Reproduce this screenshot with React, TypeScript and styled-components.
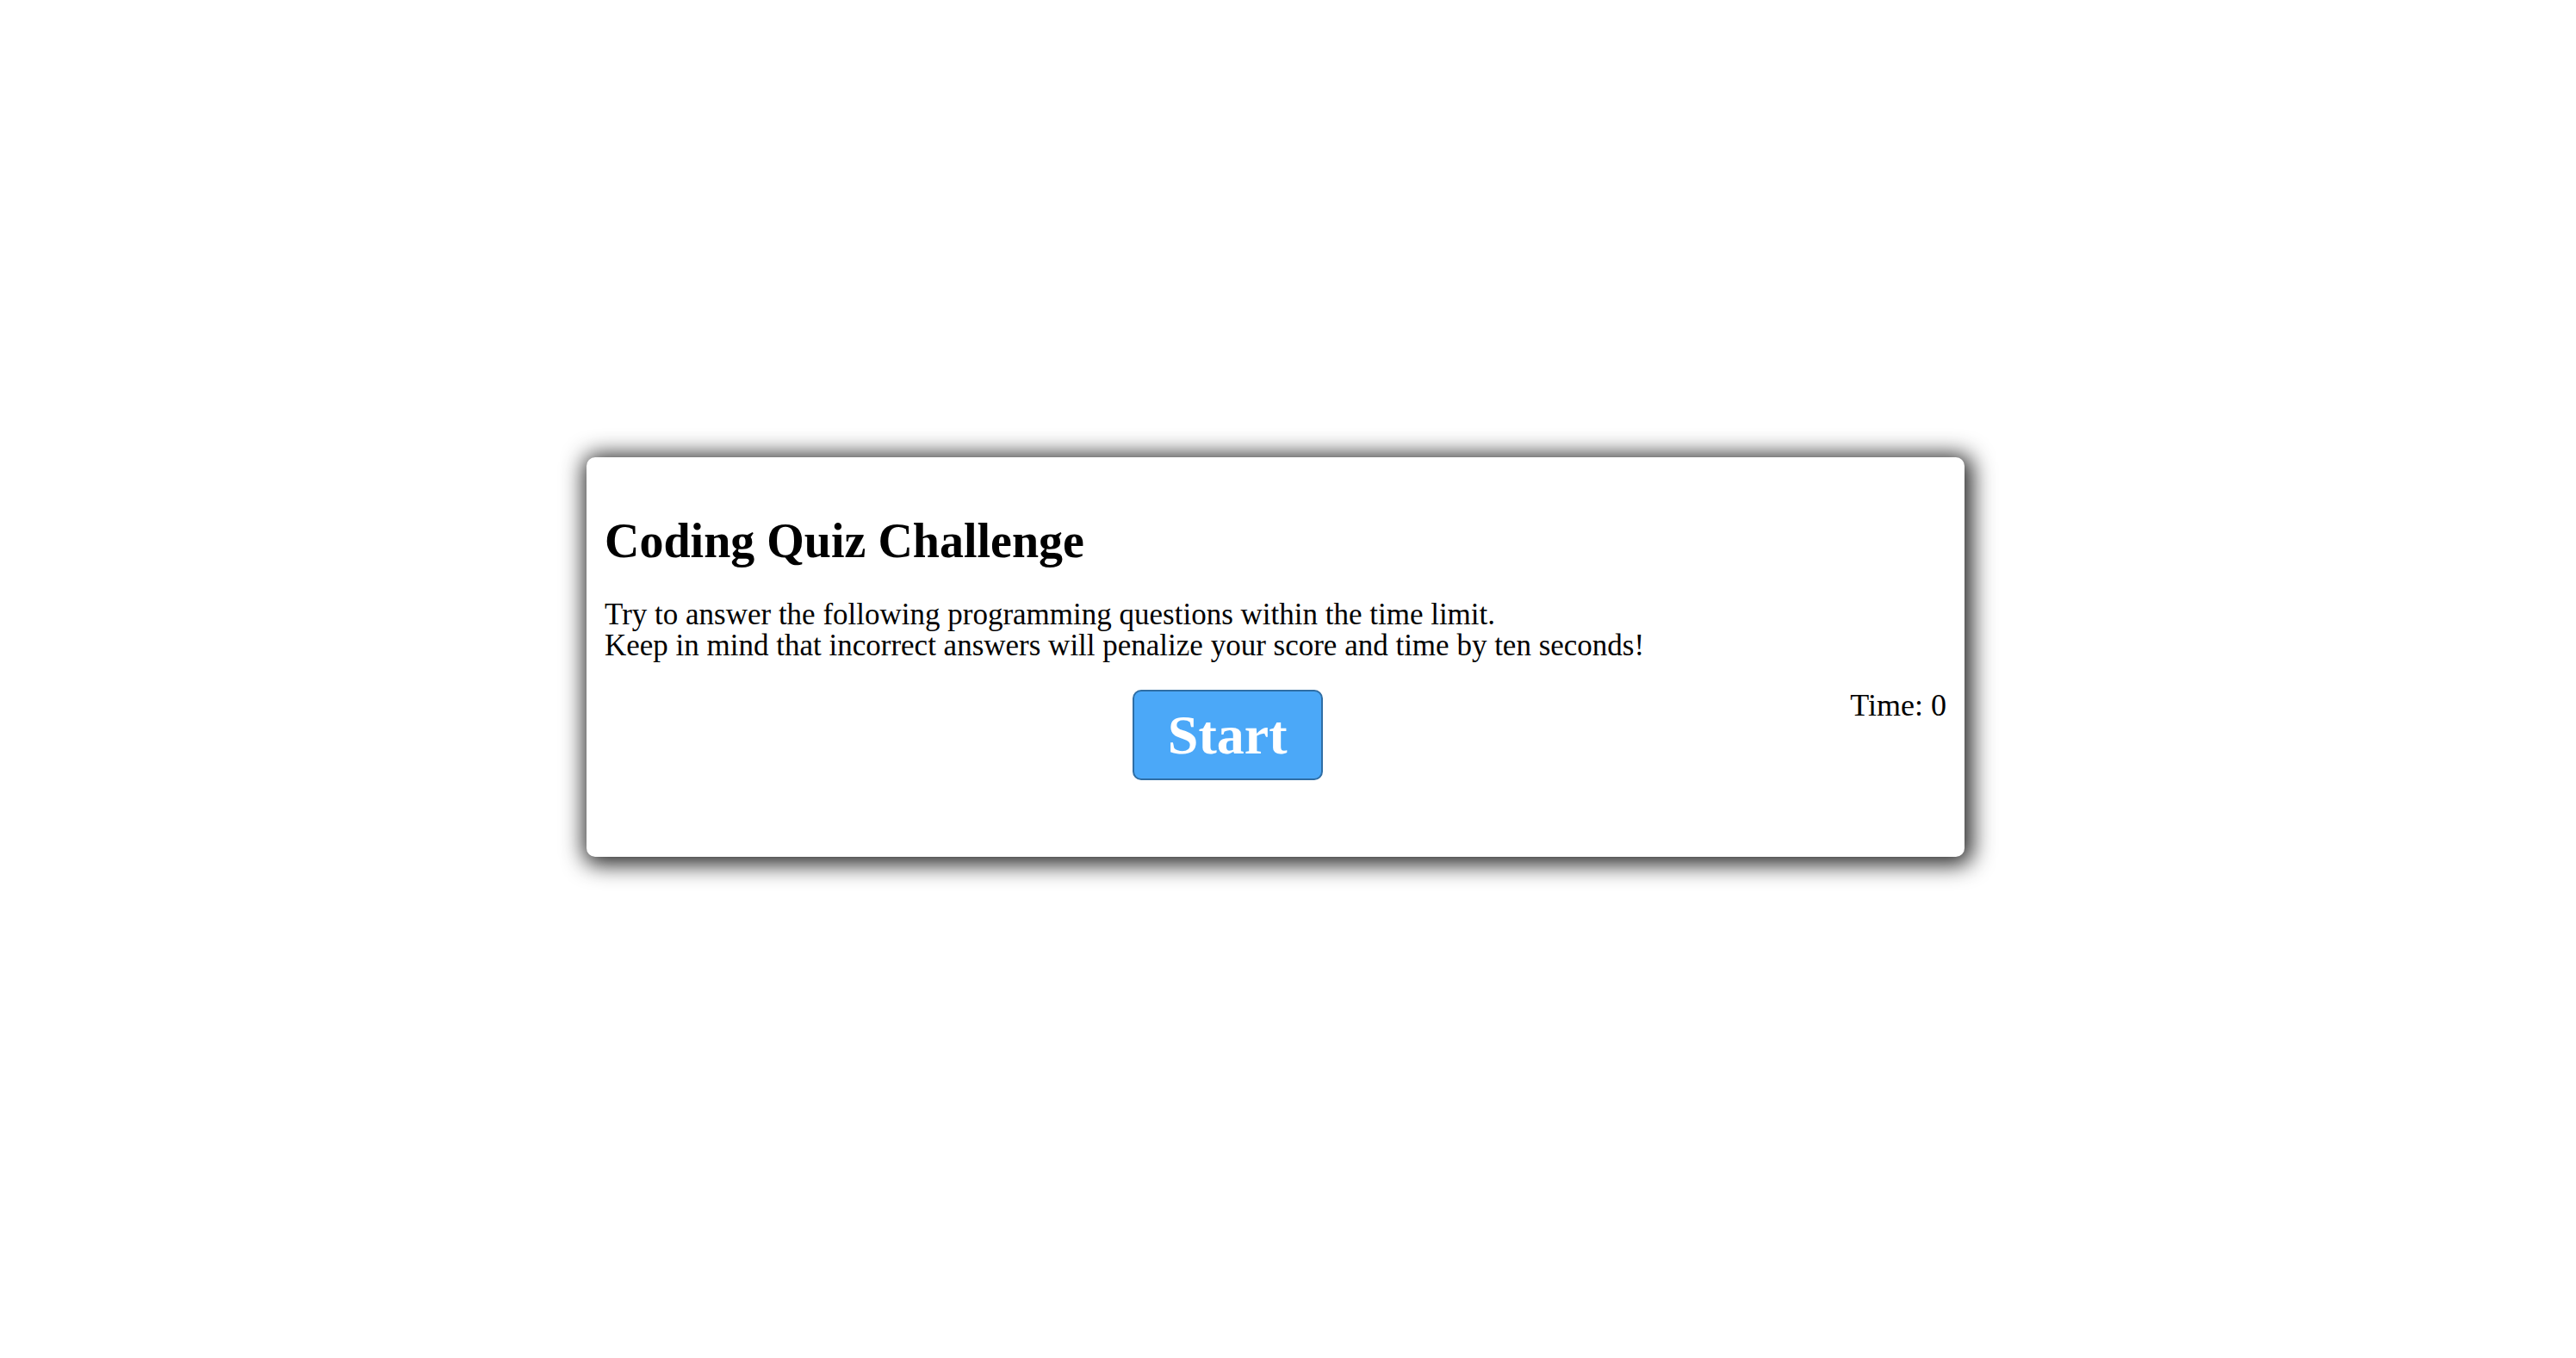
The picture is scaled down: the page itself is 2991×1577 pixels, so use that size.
import React from "react";
import styled, { createGlobalStyle } from "styled-components";

const GlobalStyle = createGlobalStyle`
  html, body {
    margin: 0;
    padding: 0;
    background: #ffffff;
  }
  body {
    font-family: Georgia, "Liberation Serif", serif;
    color: #000;
  }
`;

const Page = styled.main`
  box-sizing: border-box;
  min-height: 100vh;
  padding-top: 531px;
  padding-left: 681px;
`;

const Card = styled.section`
  box-sizing: border-box;
  width: 1600px;
  height: 464px;
  padding: 30px 21px 0 21px;
  background: #ffffff;
  border-radius: 10px;
  box-shadow: 3px 3px 26px 6px rgba(0, 0, 0, 0.85);
`;

const Title = styled.h2`
  margin: 40px 0 40px 0;
  font-size: 56px;
  font-weight: bold;
  line-height: 55px;
`;

const Intro = styled.p`
  margin: 0 0 33px 0;
  font-size: 35px;
  line-height: 36px;
`;

const Row = styled.div`
  display: flex;
  align-items: flex-start;
`;

const ButtonArea = styled.div`
  flex: 1;
  display: flex;
  justify-content: center;
`;

const StartButton = styled.button`
  box-sizing: border-box;
  width: 221px;
  height: 105px;
  padding: 0;
  background: #4ba8f8;
  border: 2px solid #2f6ea5;
  border-radius: 10px;
  color: #ffffff;
  font-family: Georgia, "Liberation Serif", serif;
  font-size: 64px;
  font-weight: bold;
  cursor: pointer;
`;

const Timer = styled.div`
  font-size: 36px;
  line-height: 36px;
`;

export default function App() {
  return (
    <>
      <GlobalStyle />
      <Page>
        <Card>
          <Title>Coding Quiz Challenge</Title>
          <Intro>
            Try to answer the following programming questions within the time limit.
            <br />
            Keep in mind that incorrect answers will penalize your score and time by ten seconds!
          </Intro>
          <Row>
            <ButtonArea>
              <StartButton>Start</StartButton>
            </ButtonArea>
            <Timer>Time: 0</Timer>
          </Row>
        </Card>
      </Page>
    </>
  );
}
